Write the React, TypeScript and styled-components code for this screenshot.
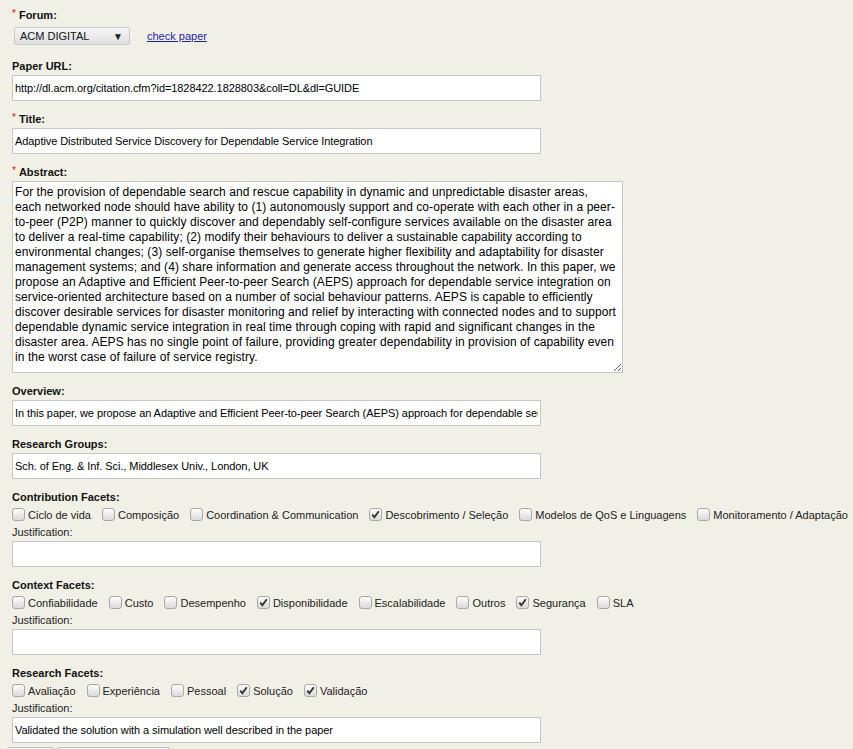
import React from 'react';
import styled, { createGlobalStyle } from 'styled-components';

const GlobalStyle = createGlobalStyle`
    body {
        margin: 0;
        background: #f1f0e6;
        font-family: "Liberation Sans", Arial, sans-serif;
        color: #111;
    }
`;

const contributionFacets = [
    { name: 'Ciclo de vida', checked: false },
    { name: 'Composição', checked: false },
    { name: 'Coordination & Communication', checked: false },
    { name: 'Descobrimento / Seleção', checked: true },
    { name: 'Modelos de QoS e Linguagens', checked: false },
    { name: 'Monitoramento / Adaptação', checked: false },
];

const contextFacets = [
    { name: 'Confiabilidade', checked: false },
    { name: 'Custo', checked: false },
    { name: 'Desempenho', checked: false },
    { name: 'Disponibilidade', checked: true },
    { name: 'Escalabilidade', checked: false },
    { name: 'Outros', checked: false },
    { name: 'Segurança', checked: true },
    { name: 'SLA', checked: false },
];

const researchFacets = [
    { name: 'Avaliação', checked: false },
    { name: 'Experiência', checked: false },
    { name: 'Pessoal', checked: false },
    { name: 'Solução', checked: true },
    { name: 'Validação', checked: true },
];

// lines broken as the original textarea wraps them
const abstractLines = [
    'For the provision of dependable search and rescue capability in dynamic and unpredictable disaster areas,',
    'each networked node should have ability to (1) autonomously support and co-operate with each other in a peer-',
    'to-peer (P2P) manner to quickly discover and dependably self-configure services available on the disaster area',
    'to deliver a real-time capability; (2) modify their behaviours to deliver a sustainable capability according to',
    'environmental changes; (3) self-organise themselves to generate higher flexibility and adaptability for disaster',
    'management systems; and (4) share information and generate access throughout the network. In this paper, we',
    'propose an Adaptive and Efficient Peer-to-peer Search (AEPS) approach for dependable service integration on',
    'service-oriented architecture based on a number of social behaviour patterns. AEPS is capable to efficiently',
    'discover desirable services for disaster monitoring and relief by interacting with connected nodes and to support',
    'dependable dynamic service integration in real time through coping with rapid and significant changes in the',
    'disaster area. AEPS has no single point of failure, providing greater dependability in provision of capability even',
    'in the worst case of failure of service registry.',
];

type Facet = { name: string; checked: boolean };

function FacetGroup({ title, facets, justification }: { title: string; facets: Facet[]; justification: string }) {
    return (
        <Field>
            <FacetTitle>{title}</FacetTitle>
            <CheckRow>
                {facets.map((f) => (
                    <CheckItem key={f.name}>
                        <CheckBox>
                            {f.checked && (
                                <svg width="11" height="11" viewBox="0 0 11 11">
                                    <path d="M2.3 5.6 L4.4 8.2 L8.8 2.3" fill="none" stroke="#333" strokeWidth="1.9" />
                                </svg>
                            )}
                        </CheckBox>
                        {f.name}
                    </CheckItem>
                ))}
            </CheckRow>
            <SubLabel>Justification:</SubLabel>
            <TextInput defaultValue={justification} />
        </Field>
    );
}

function App() {
    return (
        <>
            <GlobalStyle />
            <Form>
                <Label>
                    <Required>*</Required>Forum:
                </Label>
                <ForumRow>
                    <SelectBox>
                        <span>ACM DIGITAL</span>
                        <Arrow>▼</Arrow>
                    </SelectBox>
                    <CheckLink href="#">check paper</CheckLink>
                </ForumRow>

                <Field>
                    <Label>Paper URL:</Label>
                    <TextInput defaultValue="http://dl.acm.org/citation.cfm?id=1828422.1828803&coll=DL&dl=GUIDE" />
                </Field>
                <Field>
                    <Label>
                        <Required>*</Required>Title:
                    </Label>
                    <TextInput defaultValue="Adaptive Distributed Service Discovery for Dependable Service Integration" />
                </Field>
                <Field>
                    <Label>
                        <Required>*</Required>Abstract:
                    </Label>
                    <TextArea defaultValue={abstractLines.join('\n')} />
                </Field>
                <Field>
                    <Label>Overview:</Label>
                    <TextInput defaultValue="In this paper, we propose an Adaptive and Efficient Peer-to-peer Search (AEPS) approach for dependable service integration on service-oriented architecture" />
                </Field>
                <Field>
                    <Label>Research Groups:</Label>
                    <TextInput defaultValue="Sch. of Eng. & Inf. Sci., Middlesex Univ., London, UK" />
                </Field>

                <FacetGroup title="Contribution Facets:" facets={contributionFacets} justification="" />
                <FacetGroup title="Context Facets:" facets={contextFacets} justification="" />
                <FacetGroup
                    title="Research Facets:"
                    facets={researchFacets}
                    justification="Validated the solution with a simulation well described in the paper"
                />

                <Buttons>
                    <Button>Save</Button>
                    <Button>Save and continue</Button>
                </Buttons>
            </Form>
        </>
    );
}

const Form = styled.form`
    padding: 8px 12px 20px;
`;

const Field = styled.div`
    margin-top: 11px;
`;

const Label = styled.div`
    font-size: 11px;
    line-height: 14px;
    font-weight: bold;
    color: #111;
    margin-bottom: 2px;
`;

const FacetTitle = styled(Label)`
    margin-bottom: 0;
`;

const Required = styled.span`
    color: #e01010;
    font-size: 10px;
    font-weight: normal;
    vertical-align: top;
    line-height: 11px;
    margin-right: 3px;
`;

const ForumRow = styled.div`
    display: flex;
    align-items: center;
    gap: 17px;
    margin: 5px 0 14px 2px;
`;

const SelectBox = styled.div`
    box-sizing: border-box;
    width: 116px;
    height: 18px;
    display: flex;
    align-items: center;
    justify-content: space-between;
    padding: 0 6px 0 5px;
    font-size: 11px;
    color: #111;
    border: 1px solid #c8c8c8;
    border-radius: 2px;
    background: linear-gradient(#f6f6f6, #dedede);
`;

const Arrow = styled.span`
    font-size: 10px;
    color: #222;
`;

const CheckLink = styled.a`
    font-size: 11px;
    color: #1f1fa8;
    text-decoration: underline;
`;

const TextInput = styled.input`
    display: block;
    box-sizing: border-box;
    width: 529px;
    height: 26px;
    padding: 0 2px;
    border: 1px solid #c6c6c6;
    background: #fff;
    font-family: "Liberation Sans", Arial, sans-serif;
    font-size: 11px;
    letter-spacing: -0.07px;
    color: #000;
    outline: none;
`;

const TextArea = styled.textarea`
    display: block;
    box-sizing: border-box;
    width: 611px;
    height: 192px;
    padding: 3px 2px;
    border: 1px solid #c6c6c6;
    background: #fff;
    font-family: "Liberation Sans", Arial, sans-serif;
    font-size: 12px;
    line-height: 15px;
    letter-spacing: 0.07px;
    color: #000;
    resize: vertical;
    overflow: hidden;
    outline: none;
`;

const CheckRow = styled.div`
    display: flex;
    align-items: center;
    height: 21px;
    white-space: nowrap;
`;

const CheckItem = styled.label`
    display: flex;
    align-items: center;
    font-size: 11px;
    color: #222;
    margin-right: 11px;
`;

const CheckBox = styled.span`
    box-sizing: border-box;
    width: 13px;
    height: 13px;
    margin-right: 3px;
    display: flex;
    align-items: center;
    justify-content: center;
    border: 1px solid #a8a8a8;
    border-radius: 3px;
    background: linear-gradient(#fdfdfd, #dadada);
`;

const SubLabel = styled.div`
    font-size: 11px;
    line-height: 14px;
    color: #222;
    margin-bottom: 2px;
`;

const Buttons = styled.div`
    display: flex;
    gap: 3px;
    margin: 4px 0 0 -5px;
`;

const Button = styled.button`
    height: 24px;
    padding: 0 10px;
    font-family: "Liberation Sans", Arial, sans-serif;
    font-size: 11px;
    border: 1px solid #c4c4c4;
    border-radius: 2px;
    background: linear-gradient(#f6f6f6, #dedede);
`;

export default App;
